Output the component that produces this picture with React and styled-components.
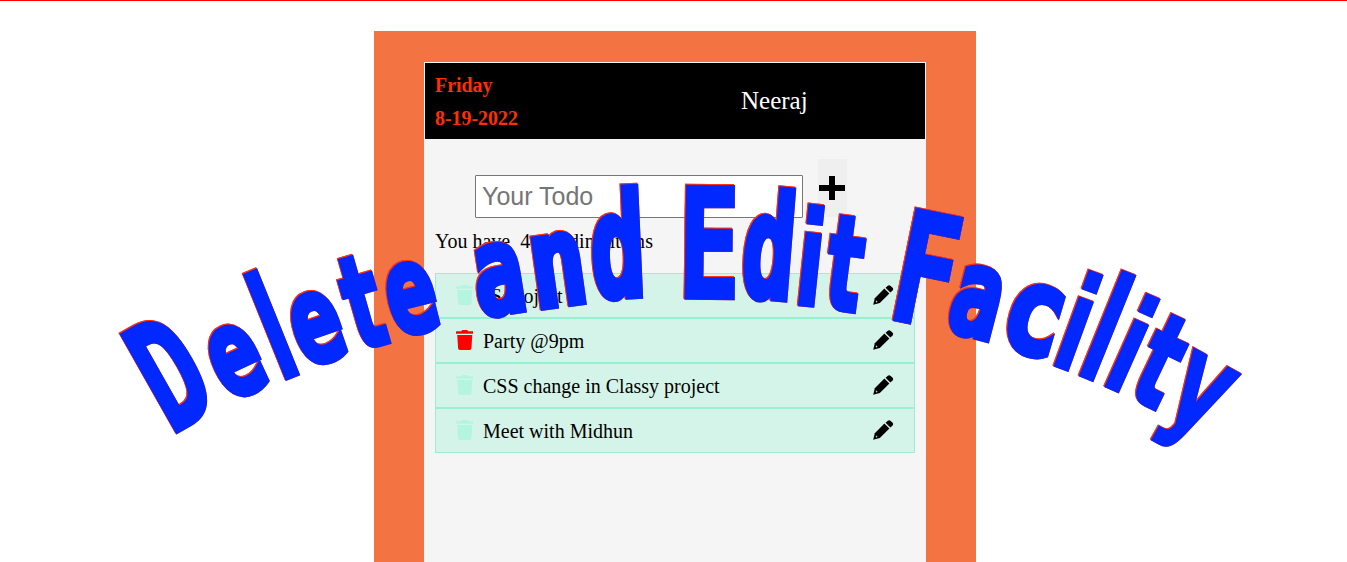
import React from "react";
import styled, { createGlobalStyle } from "styled-components";
import { FaTrash } from "react-icons/fa";

const GlobalStyle = createGlobalStyle`
  * { box-sizing: border-box; }
  html, body { margin: 0; padding: 0; }
  body {
    background: #fff;
    overflow: hidden;
    font-family: "Liberation Serif", serif;
    font-size: 20px;
    color: #000;
  }
`;

const Page = styled.div`
  position: relative;
  height: 562px;
  padding-top: 30px;
  border-top: 1px solid #f00;
  overflow: hidden;
`;

const Frame = styled.div`
  width: 602px;
  height: 531px;
  margin-left: 374px;
  padding: 31px 50px 0;
  background: #f37343;
`;

const Card = styled.main`
  height: 500px;
  border: 1px solid #f5f5f5;
  background: #f5f5f5;
`;

const Header = styled.header`
  display: flex;
  align-items: center;
  height: 76px;
  padding: 0 10px;
  background: #000;
`;

const DateBlock = styled.div`
  width: 306px;
  padding-top: 2px;
  color: #ff2f00;
  font-weight: bold;
  font-size: 19.9px;
  line-height: 33px;
`;

const UserName = styled.div`
  color: #fff;
  font-size: 25px;
`;

const Form = styled.form`
  display: flex;
  align-items: flex-end;
  gap: 15px;
  height: 79px;
  padding-left: 50px;
`;

const TodoInput = styled.input`
  width: 328px;
  height: 43px;
  padding: 1px 6px;
  border: 1px solid #767676;
  border-radius: 1px;
  background: #fff;
  font: 25px "Liberation Sans", sans-serif;
  &::placeholder { color: #757575; }
`;

const AddButton = styled.button`
  display: flex;
  width: 29px;
  height: 58px;
  margin-bottom: 1px;
  padding: 17px 0 0 1px;
  border: 0;
  background: #efefef;
`;

const Summary = styled.p`
  margin: 11px 10px 0;
  line-height: 24px;
  white-space: pre;
`;

const List = styled.ul`
  margin: 20px 10px 0;
  padding: 0;
  list-style: none;
`;

const Item = styled.li`
  display: flex;
  align-items: center;
  height: 45px;
  padding: 0 20px;
  border: 1px solid #98f0d1;
  background: #d5f4e9;
`;

const Trash = styled(FaTrash)`
  width: 17.5px;
  height: 20px;
  margin: 0 10px 2px -0.5px;
  color: ${(p) => (p.$active ? "#f00" : "#b4f5df")};
`;

const Label = styled.span`
  flex: 1;
  padding-top: 1px;
`;

const PencilIcon = styled.svg`
  width: 21px;
  height: 20px;
  margin-bottom: 2px;
`;

const Pencil = () => (
  <PencilIcon viewBox="0 0 21 20">
    <path d="M11.4 3.6 16.4 8.6 6.8 18 0.2 19.8 1.8 13.2z" />
    <path d="M12.6 2.8 14.5 1q1.6-1.5 3.2 0l1.7 1.6q1.5 1.6 0 3.2L17.3 7.5z" />
    <path d="M3.4 15.2 3.8 16.4l1 .4-1.4.6-.7-.7z" fill="#d5f4e9" />
  </PencilIcon>
);

const Banner = styled.svg`
  position: absolute;
  top: -1px;
  left: 0;
  width: 1347px;
  height: 562px;
  pointer-events: none;
  filter: drop-shadow(0.6px 0.6px 0 #ff3010) drop-shadow(-0.5px -0.3px 0 #ff3010);
`;

const Glyph = styled.text`
  font: bold 100px ${(p) => p.$family};
  fill: #0028ff;
  stroke: #0028ff;
  stroke-width: ${(p) => p.$weight}px;
  stroke-linejoin: miter;
  vector-effect: non-scaling-stroke;
`;

/* [character, baseline x, baseline y, rotation, width, height above baseline, depth below] */
const LETTERS = [
  ["D", 175.3, 434.7, -29.5, 53, 115, 0],
  ["e", 229.5, 405.5, -25, 50, 76, 0],
  ["l", 285.3, 381, -22, 16.5, 115, 0],
  ["e", 306, 371.5, -19, 50, 76, 0],
  ["t", 357, 353.2, -16, 38, 95, 0],
  ["e", 396.7, 340.8, -14, 50, 76, 0],
  ["a", 480, 320.6, -9, 49, 76, 0],
  ["n", 540, 310.9, -8, 48.5, 76, 0],
  ["d", 593.3, 303.3, -2.5, 51, 117, 0],
  ["E", 684.3, 299.7, 0.7, 50.5, 115, 0],
  ["d", 739, 301, 4.5, 49, 117, 0],
  ["i", 797.3, 306, 6, 17.3, 103, 0],
  ["t", 820, 309, 7.5, 38, 96, 0],
  ["F", 892.3, 321, 11.5, 49.8, 116, 0],
  ["a", 943, 332.4, 14.5, 48.5, 76, 0],
  ["c", 998.8, 348.8, 16.5, 50, 76, 0],
  ["i", 1053, 366.3, 20, 16.7, 103, 0],
  ["l", 1078.3, 376, 22, 16.7, 115, 0],
  ["i", 1103.7, 386.7, 24, 16.7, 103, 0],
  ["t", 1123.7, 396.1, 25.5, 38, 95, 0],
  ["y", 1157.8, 411.4, 29, 56, 74, 29],
];

/* Rounded letters use the monospaced cut, which has straighter sides. */
const familyOf = (char) =>
  "aecdnD".includes(char)
    ? '"DejaVu Sans Mono", monospace'
    : '"DejaVu Sans", sans-serif';

const weightOf = (char) => {
  if ("aecdn".includes(char)) return 6;
  if ("tD".includes(char)) return 3.5;
  return "EF".includes(char) ? 0.6 : 1.6;
};

const pen = document.createElement("canvas").getContext("2d");

function fitGlyph([char, x, y, angle, width, rise, drop]) {
  pen.font = `bold 100px ${familyOf(char)}`;
  const inset = weightOf(char) / 2;
  const m = pen.measureText(char);
  const left = -m.actualBoundingBoxLeft;
  const sx = (width - 2 * inset) / (m.actualBoundingBoxRight - left);
  const sy =
    (rise + drop - 2 * inset) / (m.actualBoundingBoxAscent + m.actualBoundingBoxDescent);
  const dx = inset - left * sx;
  const dy = drop - inset - m.actualBoundingBoxDescent * sy;
  return `translate(${x} ${y}) rotate(${angle}) translate(${dx} ${dy}) scale(${sx} ${sy})`;
}

const TODOS = [
  { text: "JS project" },
  { text: "Party @9pm", active: true },
  { text: "CSS change in Classy project" },
  { text: "Meet with Midhun" },
];

export default function App() {
  return (
    <Page>
      <GlobalStyle />
      <Frame>
        <Card>
          <Header>
            <DateBlock>
              <div>Friday</div>
              <div>8-19-2022</div>
            </DateBlock>
            <UserName>Neeraj</UserName>
          </Header>
          <Form>
            <TodoInput placeholder="Your Todo" />
            <AddButton type="button" aria-label="Add">
              <svg width="26" height="24" viewBox="0 0 26 24">
                <path d="M10 0h6v9h10v6H16v9h-6v-9H0V9h10z" />
              </svg>
            </AddButton>
          </Form>
          <Summary>{"You have  4  pending items"}</Summary>
          <List>
            {TODOS.map((todo) => (
              <Item key={todo.text}>
                <Trash $active={todo.active} />
                <Label>{todo.text}</Label>
                <Pencil />
              </Item>
            ))}
          </List>
        </Card>
      </Frame>
      <Banner viewBox="0 0 1347 562" aria-label="Delete and Edit Facility">
        {LETTERS.map((letter, i) => (
          <Glyph
            key={i}
            $family={familyOf(letter[0])}
            $weight={weightOf(letter[0])}
            transform={fitGlyph(letter)}
          >
            {letter[0]}
          </Glyph>
        ))}
      </Banner>
    </Page>
  );
}
